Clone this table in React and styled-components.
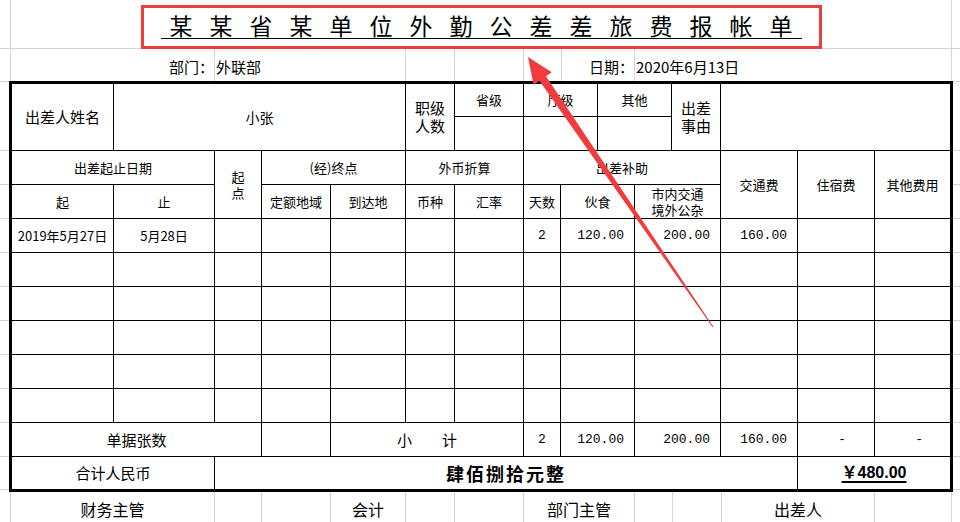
import React from "react"
import styled, { createGlobalStyle } from "styled-components"

const GRID = "#d4d4d4"
const RED = "#f03c3c"

const GlobalStyle = createGlobalStyle`
html, body {
  margin: 0;
  padding: 0;
  background: #fff;
}
body {
  font-family: "Noto Sans CJK SC", "Liberation Sans", sans-serif;
  color: #000;
}
`

const Page = styled.div`
position: relative;
width: 960px;
height: 522px;
overflow: hidden;
background: #fff;
`

// sheet rows outside the table (light excel gridlines)
const SheetRow = styled.div`
display: grid;
grid-template-columns: ${p => p.$cols};
height: ${p => p.$h}px;
box-sizing: border-box;
border-bottom: ${p => (p.$line ? `1px solid ${GRID}` : "none")};
`
const SheetCell = styled.div`
box-sizing: border-box;
min-width: 0;
border-right: ${p => (p.$last ? "none" : `1px solid ${GRID}`)};
display: flex;
align-items: ${p => p.$alignY || "center"};
justify-content: ${p => p.$justify || "center"};
padding: ${p => p.$pad || "0"};
font-size: ${p => p.$size || 15}px;
white-space: nowrap;
`

const TitleBox = styled.div`
box-sizing: border-box;
width: 681px;
height: 44px;
margin-top: 5px;
border: 3px solid ${RED};
display: flex;
justify-content: center;
padding-top: 6px;
`
const TitleText = styled.div`
display: flex;
gap: 17px;
padding: 0 9px 1px;
font-size: 23px;
line-height: 23px;
border-bottom: 1px solid #000;
height: fit-content;
`

const TableBand = styled.div`
display: flex;
height: 411px;
`
const Gutter = styled.div`
width: ${p => p.$w}px;
flex: none;
box-sizing: border-box;
border-top: 1px solid ${GRID};
display: flex;
flex-direction: column;
`
const GutterCell = styled.div`
flex: none;
height: ${p => p.$h}px;
box-sizing: border-box;
border-bottom: 1px solid ${GRID};
`

const Table = styled.div`
display: grid;
grid-template-columns: 101px 100px 46px 68px 74px 48px 68px 36px 36px 36px 36px 48px 76px 76px 75px;
grid-template-rows: 32px repeat(10, 33px) 32px;
gap: 1px;
width: 944px;
flex: none;
box-sizing: border-box;
background: #000;
border: 3px solid #000;
`
const Cell = styled.div`
grid-column: ${p => p.$c};
grid-row: ${p => p.$r};
background: #fff;
min-width: 0;
display: flex;
align-items: center;
justify-content: ${p => (p.$right ? "flex-end" : "center")};
text-align: center;
padding-right: ${p => p.$pr || 0}px;
font-size: ${p => p.$size || 13}px;
line-height: ${p => p.$lh || 16}px;
white-space: pre-line;
`
const Num = styled(Cell)`
font-family: "Liberation Mono", "Noto Sans CJK SC", monospace;
font-size: 13px;
`
const BigWords = styled(Cell)`
font-size: 18px;
font-weight: 700;
letter-spacing: 2px;
`
const Amount = styled.span`
font-family: "Liberation Sans", "Noto Sans CJK SC", sans-serif;
font-size: 16px;
font-weight: 700;
text-decoration: underline;
text-decoration-thickness: 2px;
text-underline-offset: 3px;
`

const ArrowLayer = styled.svg`
position: absolute;
left: 0;
top: 0;
pointer-events: none;
`

const title = "某某省某单位外勤公差差旅费报帐单".split("")
const gutterRows = [69, 34, 34, 34, 34, 34, 34, 34, 34, 34, 33]

const trips = [
  { from: "2019年5月27日", to: "5月28日", days: "2", food: "120.00", local: "200.00", traffic: "160.00" },
  {}, {}, {}, {}, {},
]

const Sides = () => (
  <>
    {gutterRows.map((h, i) => <GutterCell key={i} $h={h} />)}
  </>
)

const TripRow = ({ trip, row }) => (
  <>
    <Cell $c="1" $r={row}>{trip.from}</Cell>
    <Cell $c="2" $r={row}>{trip.to}</Cell>
    <Cell $c="3" $r={row} />
    <Cell $c="4" $r={row} />
    <Cell $c="5" $r={row} />
    <Cell $c="6" $r={row} />
    <Cell $c="7" $r={row} />
    <Num $c="8" $r={row}>{trip.days}</Num>
    <Num $c="9 / 11" $r={row} $right $pr={10}>{trip.food}</Num>
    <Num $c="11 / 13" $r={row} $right $pr={10}>{trip.local}</Num>
    <Num $c="13" $r={row} $right $pr={10}>{trip.traffic}</Num>
    <Cell $c="14" $r={row} />
    <Cell $c="15" $r={row} />
  </>
)

export default function App() {
  return (
    <Page>
      <GlobalStyle />

      <SheetRow $cols="11px 941px 1fr" $h={49} $line>
        <SheetCell />
        <SheetCell $alignY="flex-start">
          <TitleBox>
            <TitleText>
              {title.map((ch, i) => <span key={i}>{ch}</span>)}
            </TitleText>
          </TitleBox>
        </SheetCell>
        <SheetCell $last />
      </SheetRow>

      <SheetRow $cols="11px 204px 191px 49px 69px 38px 73px 317px 1fr" $h={32}>
        <SheetCell />
        <SheetCell $justify="flex-end" $pad="2px 0 0">部门：</SheetCell>
        <SheetCell $justify="flex-start" $pad="2px 0 0 1px">外联部</SheetCell>
        <SheetCell />
        <SheetCell />
        <SheetCell />
        <SheetCell $justify="flex-end" $pad="2px 0 0">日期：</SheetCell>
        <SheetCell $justify="flex-start" $pad="2px 0 0 1px">2020年6月13日</SheetCell>
        <SheetCell $last />
      </SheetRow>

      <TableBand>
        <Gutter $w={9}><Sides /></Gutter>
        <Table>
          <Cell $c="1" $r="1 / 3" $size={15}>出差人姓名</Cell>
          <Cell $c="2 / 6" $r="1 / 3" $size={14}>小张</Cell>
          <Cell $c="6" $r="1 / 3" $size={15} $lh={18}>{"职级\n人数"}</Cell>
          <Cell $c="7" $r="1">省级</Cell>
          <Cell $c="7" $r="2" />
          <Cell $c="8 / 10" $r="1">厅级</Cell>
          <Cell $c="8 / 10" $r="2" />
          <Cell $c="10 / 12" $r="1">其他</Cell>
          <Cell $c="10 / 12" $r="2" />
          <Cell $c="12" $r="1 / 3" $size={15} $lh={18}>{"出差\n事由"}</Cell>
          <Cell $c="13 / 16" $r="1 / 3" />

          <Cell $c="1 / 3" $r="3">出差起止日期</Cell>
          <Cell $c="3" $r="3 / 5">{"起\n点"}</Cell>
          <Cell $c="4 / 6" $r="3">(经)终点</Cell>
          <Cell $c="6 / 8" $r="3">外币折算</Cell>
          <Cell $c="8 / 13" $r="3">出差补助</Cell>
          <Cell $c="13" $r="3 / 5">交通费</Cell>
          <Cell $c="14" $r="3 / 5">住宿费</Cell>
          <Cell $c="15" $r="3 / 5">其他费用</Cell>

          <Cell $c="1" $r="4">起</Cell>
          <Cell $c="2" $r="4">止</Cell>
          <Cell $c="4" $r="4">定额地域</Cell>
          <Cell $c="5" $r="4">到达地</Cell>
          <Cell $c="6" $r="4">币种</Cell>
          <Cell $c="7" $r="4">汇率</Cell>
          <Cell $c="8" $r="4">天数</Cell>
          <Cell $c="9 / 11" $r="4">伙食</Cell>
          <Cell $c="11 / 13" $r="4">{"市内交通\n境外公杂"}</Cell>

          {trips.map((t, i) => <TripRow key={i} trip={t} row={5 + i} />)}

          <Cell $c="1 / 4" $r="11" $size={15}>单据张数</Cell>
          <Cell $c="4" $r="11" />
          <Cell $c="5 / 8" $r="11" $size={15}>小　　计</Cell>
          <Num $c="8" $r="11">2</Num>
          <Num $c="9 / 11" $r="11" $right $pr={10}>120.00</Num>
          <Num $c="11 / 13" $r="11" $right $pr={10}>200.00</Num>
          <Num $c="13" $r="11" $right $pr={10}>160.00</Num>
          <Num $c="14" $r="11" $right $pr={28}>-</Num>
          <Num $c="15" $r="11" $right $pr={27}>-</Num>

          <Cell $c="1 / 3" $r="12" $size={15}>合计人民币</Cell>
          <BigWords $c="3 / 14" $r="12">肆佰捌拾元整</BigWords>
          <Cell $c="14 / 16" $r="12"><Amount>￥480.00</Amount></Cell>
        </Table>
        <Gutter $w={7}><Sides /></Gutter>
      </TableBand>

      <SheetRow $cols="11px 204px 47px 69px 75px 49px 69px 111px 38px 49px 153px 77px 1fr" $h={33}>
        <SheetCell />
        <SheetCell $size={16}>财务主管</SheetCell>
        <SheetCell />
        <SheetCell />
        <SheetCell $size={16}>会计</SheetCell>
        <SheetCell />
        <SheetCell />
        <SheetCell $size={16}>部门主管</SheetCell>
        <SheetCell />
        <SheetCell />
        <SheetCell $size={16}>出差人</SheetCell>
        <SheetCell />
        <SheetCell $last />
      </SheetRow>

      <ArrowLayer width="960" height="522" viewBox="0 0 960 522">
        <polygon
          points="528,57 551.8,72.3 546,76.2 713.4,326.7 712.6,327.3 539.4,80.8 533.6,84.7"
          fill={RED}
        />
      </ArrowLayer>
    </Page>
  )
}
